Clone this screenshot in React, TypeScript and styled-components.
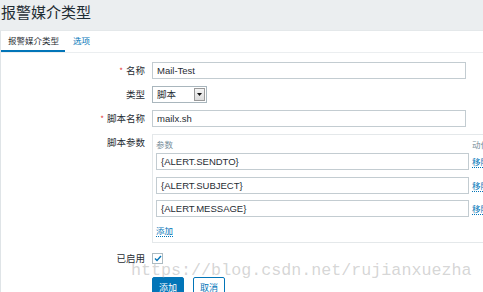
import React from "react";
import styled, { createGlobalStyle } from "styled-components";

const cjk = `"Noto Sans CJK SC", "Liberation Sans", sans-serif`;

const GlobalStyle = createGlobalStyle`
  html, body {
    margin: 0;
    padding: 0;
    background: #ebeef0;
    overflow: hidden;
  }
  body {
    font-family: "Liberation Sans", Arial, "Noto Sans CJK SC", sans-serif;
    color: #1f2c33;
  }
`;

const Page = styled.div`
  position: relative;
  width: 483px;
  height: 292px;
  overflow: hidden;
  display: flex;
  flex-direction: column;
`;

const Header = styled.h1`
  flex: none;
  margin: 0;
  height: 30px;
  padding: 0 0 0 1px;
  box-sizing: border-box;
  font-family: ${cjk};
  font-size: 15px;
  font-weight: normal;
  line-height: 23px;
  color: #1f2c33;
`;

const Panel = styled.div`
  flex: none;
  background: #fff;
  border-left: 1px solid #dfe4e7;
  border-top: 1px solid #e4e8ea;
  min-height: 300px;
`;

const TabBar = styled.div`
  display: flex;
  border-bottom: 1px solid #ebeef0;
`;

const Tab = styled.div<{ active?: boolean }>`
  padding: 0 6px 0 ${(p) => (p.active ? 7 : 8)}px;
  font-family: ${cjk};
  font-size: 8.5px;
  height: 19px;
  line-height: 19px;
  color: ${(p) => (p.active ? "#1f2c33" : "#0275b8")};
  border-bottom: 2px solid ${(p) => (p.active ? "#0275b8" : "transparent")};
`;

const Form = styled.div`
  display: grid;
  grid-template-columns: 144px 1fr;
  column-gap: 7px;
  row-gap: 7px;
  padding-top: 9px;
`;

const Label = styled.div<{ top?: boolean }>`
  text-align: right;
  font-family: ${cjk};
  font-size: 9.5px;
  height: 17px;
  line-height: 17px;
  align-self: ${(p) => (p.top ? "start" : "center")};
`;

const Req = styled.span`
  color: #e33734;
  margin-right: 3px;
  font-size: 8px;
`;

const TextInput = styled.div<{ w?: number }>`
  box-sizing: border-box;
  width: ${(p) => p.w ?? 314}px;
  height: 17px;
  border: 1px solid #c3ccd1;
  background: #fff;
  padding-left: 4px;
  font-size: 9.5px;
  line-height: 15px;
  white-space: nowrap;
  overflow: hidden;
`;

const Select = styled.div`
  box-sizing: border-box;
  width: 55px;
  height: 17px;
  border: 1px solid #a9b6bd;
  display: flex;
  align-items: stretch;
  font-family: ${cjk};
  font-size: 9.5px;
  line-height: 15px;
`;

const SelectText = styled.span`
  flex: 1;
  padding-left: 4px;
`;

const SelectArrow = styled.span`
  width: 11px;
  margin: 1px;
  background: linear-gradient(#f4f4f4, #dcdcdc);
  border: 1px solid #9a9a9a;
  box-sizing: border-box;
  display: flex;
  align-items: center;
  justify-content: center;
`;

const ParamBox = styled.div`
  box-sizing: border-box;
  width: 340px;
  border: 1px solid #e4e8ea;
  padding: 0 0 4px 3px;
`;

const ParamGrid = styled.div`
  display: grid;
  grid-template-columns: 313px auto;
  column-gap: 3px;
  row-gap: 6.5px;
  align-items: center;
`;

const ColHead = styled.div`
  font-family: ${cjk};
  font-size: 8.5px;
  height: 18px;
  line-height: 18px;
  color: #768d99;
  margin-bottom: -6.5px;
  white-space: nowrap;
`;

const LinkCell = styled.div`
  height: 17px;
  display: flex;
  align-items: center;
`;

const Link = styled.a`
  font-family: ${cjk};
  font-size: 8.5px;
  line-height: 12px;
  color: #0275b8;
  text-decoration: none;
  border-bottom: 1px dotted #0275b8;
  white-space: nowrap;
  cursor: pointer;
`;

const AddLink = styled(Link)`
  display: inline-block;
  vertical-align: top;
  margin-top: 7px;
`;

const AddRow = styled.div`
  height: 21px;
`;

const Check = styled.div`
  box-sizing: border-box;
  width: 11px;
  height: 11px;
  border: 1px solid #acbbc2;
  display: flex;
  align-items: center;
  justify-content: center;
  align-self: center;
`;

const Buttons = styled.div`
  display: flex;
  gap: 9px;
  margin-top: 3px;
`;

const Button = styled.button<{ primary?: boolean }>`
  box-sizing: border-box;
  height: 22px;
  padding: 0 6px;
  font-family: ${cjk};
  font-size: 9px;
  line-height: 20px;
  border: 1px solid #0275b8;
  background: ${(p) => (p.primary ? "#0275b8" : "#fff")};
  color: ${(p) => (p.primary ? "#fff" : "#0275b8")};
  border-radius: 2px;
  align-self: flex-start;
`;

const Watermark = styled.div`
  position: absolute;
  left: 131px;
  top: 261px;
  font-family: "Liberation Mono", monospace;
  font-size: 16.7px;
  line-height: 20px;
  color: rgba(150, 150, 150, 0.4);
  white-space: nowrap;
  pointer-events: none;
`;

const params = ["{ALERT.SENDTO}", "{ALERT.SUBJECT}", "{ALERT.MESSAGE}"];

export default function App() {
  return (
    <Page>
      <GlobalStyle />
      <Header>报警媒介类型</Header>
      <Panel>
        <TabBar>
          <Tab active>报警媒介类型</Tab>
          <Tab>选项</Tab>
        </TabBar>
        <Form>
          <Label>
            <Req>*</Req>名称
          </Label>
          <TextInput>Mail-Test</TextInput>

          <Label>类型</Label>
          <Select>
            <SelectText>脚本</SelectText>
            <SelectArrow>
              <svg width="5" height="3" viewBox="0 0 5 3">
                <path d="M0 0H5L2.5 3Z" fill="#111" />
              </svg>
            </SelectArrow>
          </Select>

          <Label>
            <Req>*</Req>脚本名称
          </Label>
          <TextInput>mailx.sh</TextInput>

          <Label top>脚本参数</Label>
          <ParamBox>
            <ParamGrid>
              <ColHead>参数</ColHead>
              <ColHead>动作</ColHead>
              {params.map((p) => (
                <React.Fragment key={p}>
                  <TextInput w={313}>{p}</TextInput>
                  <LinkCell>
                    <Link>移除</Link>
                  </LinkCell>
                </React.Fragment>
              ))}
            </ParamGrid>
            <AddRow>
              <AddLink>添加</AddLink>
            </AddRow>
          </ParamBox>

          <Label>已启用</Label>
          <Check>
            <svg width="8" height="7" viewBox="0 0 8 7">
              <path d="M1 3.5L3 5.5L7 1" stroke="#0275b8" strokeWidth="1.4" fill="none" />
            </svg>
          </Check>

          <div />
          <Buttons>
            <Button primary>添加</Button>
            <Button>取消</Button>
          </Buttons>
        </Form>
      </Panel>
      <Watermark>https://blog.csdn.net/rujianxuezha</Watermark>
    </Page>
  );
}
